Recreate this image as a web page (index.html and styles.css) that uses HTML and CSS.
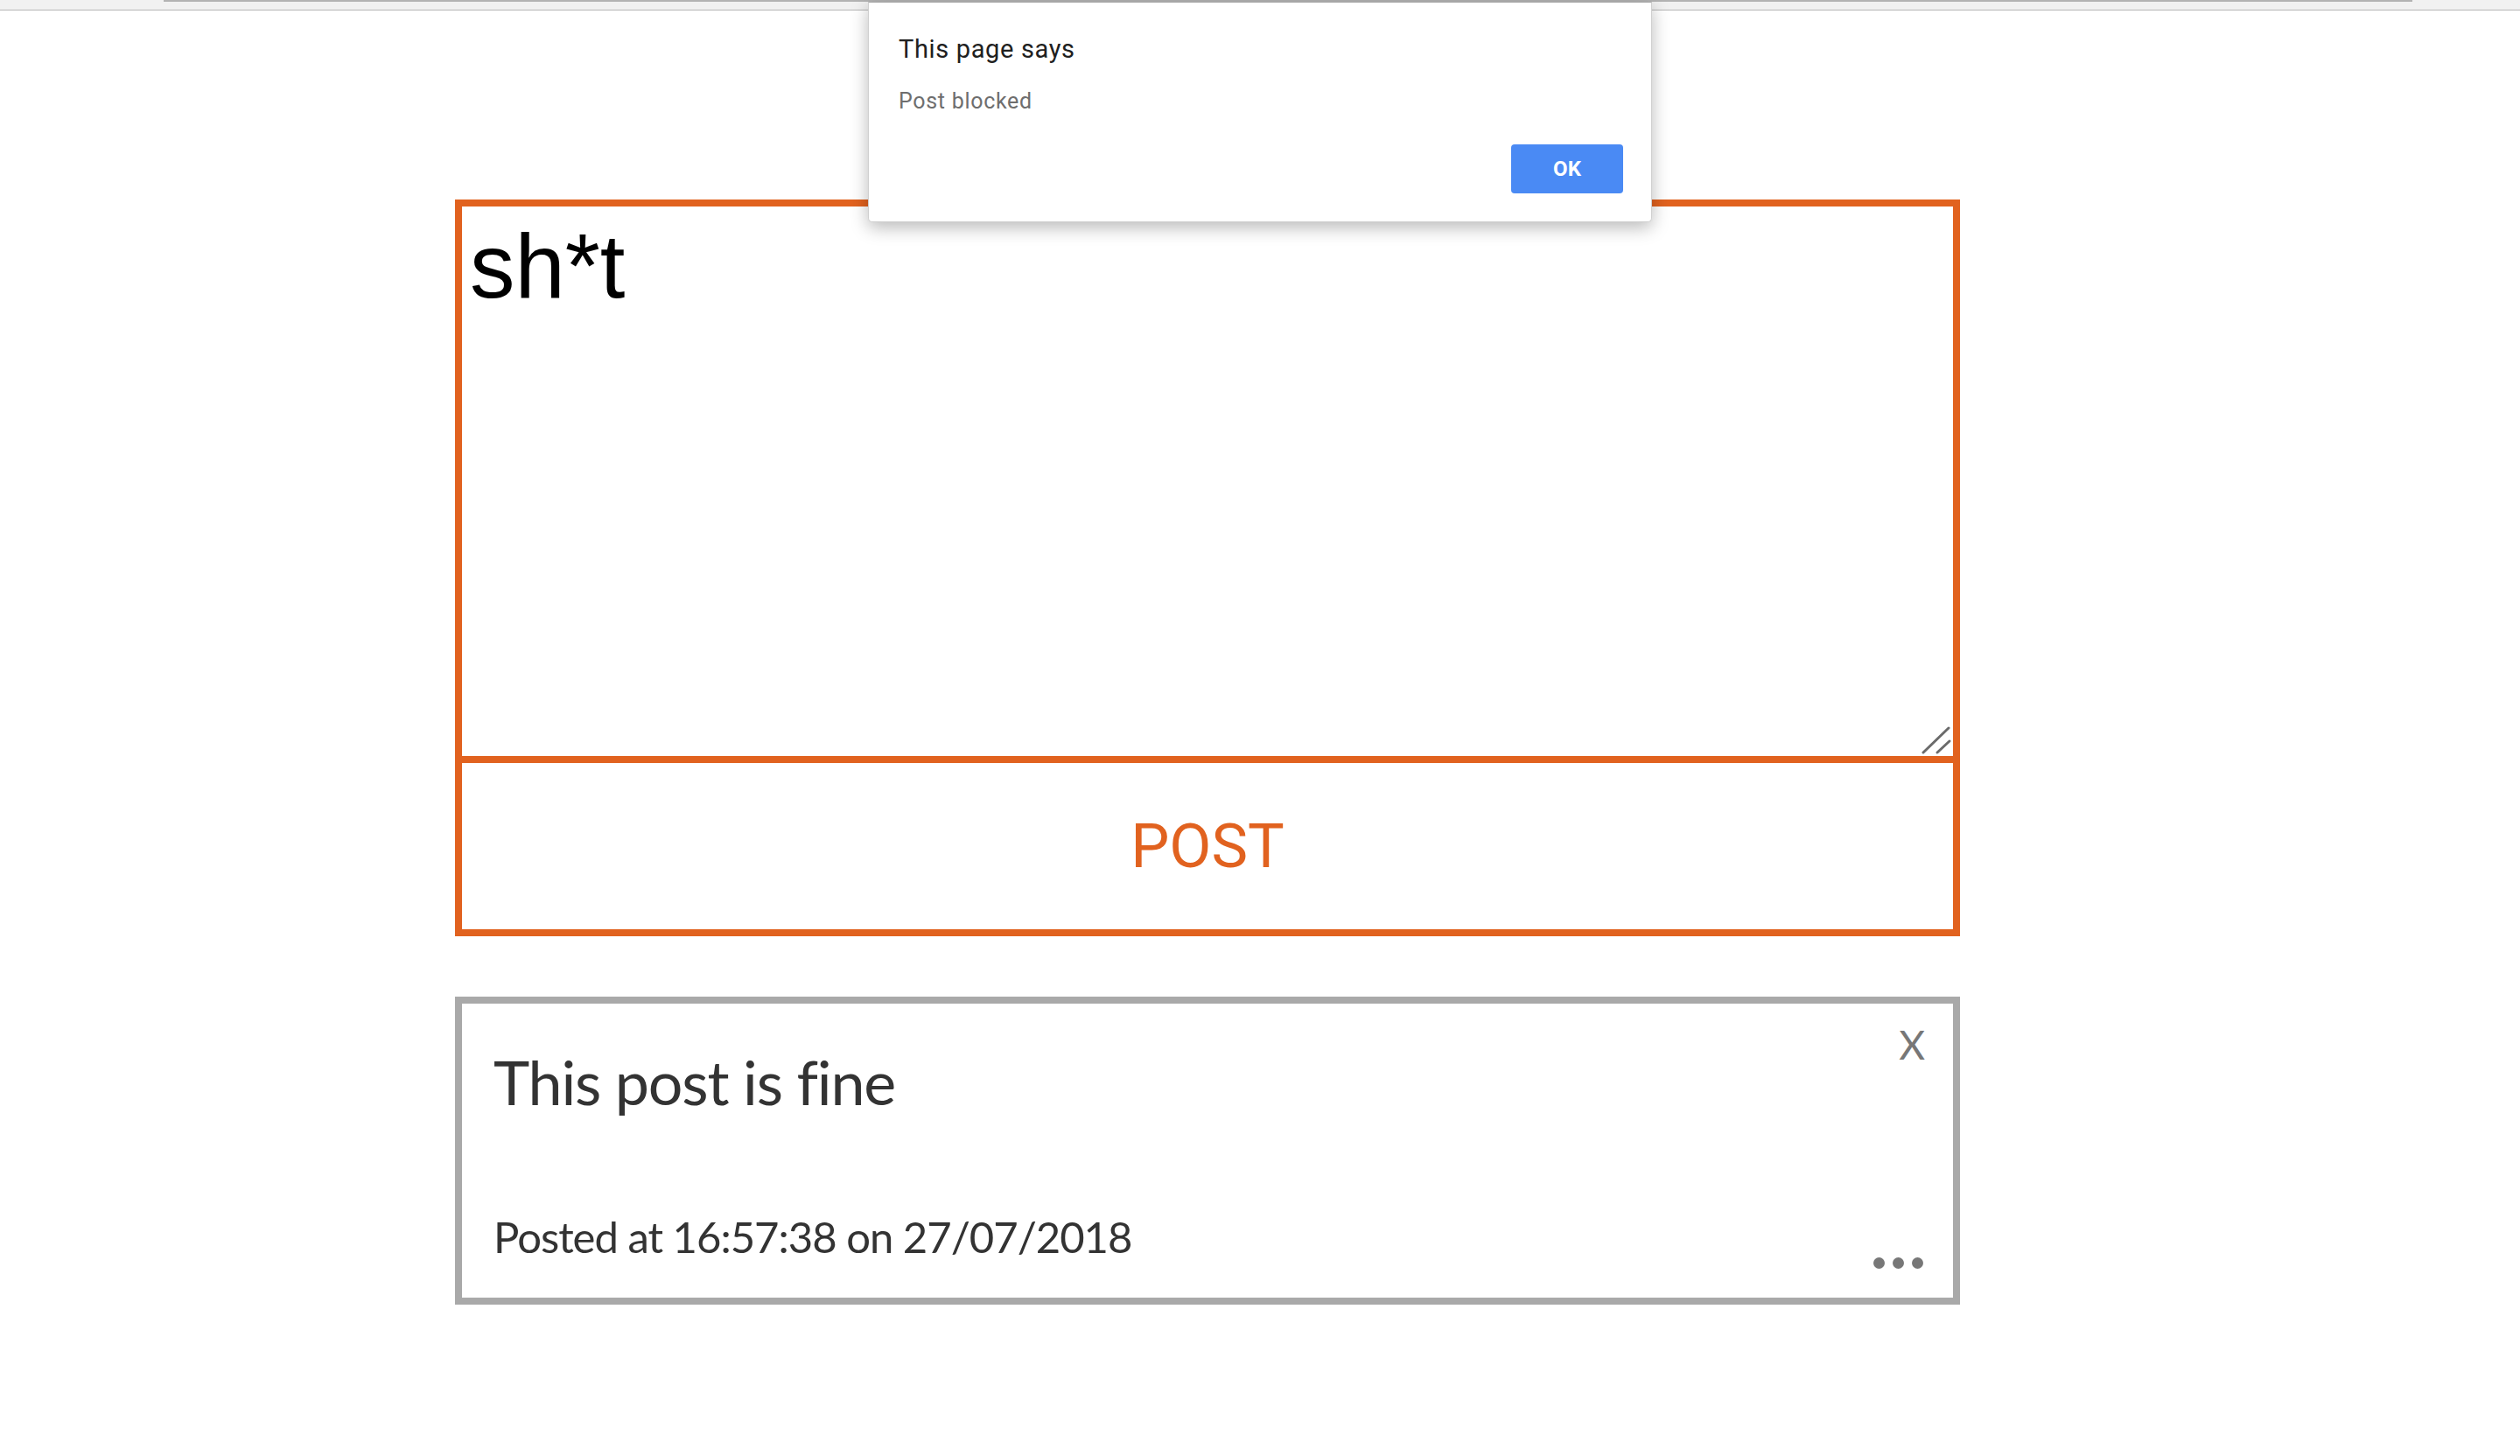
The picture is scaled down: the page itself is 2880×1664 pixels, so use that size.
FILE: index.html
```html
<!DOCTYPE html>
<html lang="en">
<head>
<meta charset="utf-8">
<title>Post</title>
<link rel="stylesheet" href="styles.css">
</head>
<body>
<div class="chrome"><div class="chrome-line"></div></div>

<main class="page">
  <form class="composer">
    <div class="input-box">
      <textarea class="input" spellcheck="false">sh*t</textarea>
      <svg class="grip" width="36" height="36" viewBox="0 0 36 36" aria-hidden="true">
        <line x1="2" y1="32" x2="31" y2="4"/>
        <line x1="18" y1="32" x2="32" y2="19"/>
      </svg>
    </div>
    <button type="button" class="post-btn">POST</button>
  </form>

  <article class="card">
    <h2 class="card-title">This post is fine</h2>
    <p class="card-meta">Posted at 16:57:38 on 27/07/2018</p>
    <span class="card-close">X</span>
    <span class="card-more"><i></i><i></i><i></i></span>
  </article>
</main>

<div class="dialog" role="alertdialog">
  <div class="dialog-title">This page says</div>
  <div class="dialog-msg">Post blocked</div>
  <div class="dialog-actions"><button type="button" class="dialog-ok">OK</button></div>
</div>
</body>
</html>
```

FILE: styles.css
```css
html, body {
  margin: 0;
  padding: 0;
  background: #ffffff;
}

body {
  font-family: "Liberation Sans", Arial, sans-serif;
  position: relative;
  min-height: 1664px;
}

.chrome {
  height: 11px;
  background: #f1f1f1;
  border-bottom: 1px solid #b6b6b6;
}

.chrome-line {
  height: 2px;
  margin: 0 123px 0 187px;
  background: #b3b3b3;
}

.page {
  width: 1720px;
  margin: 216px 0 0 520px;
}

.composer {
  margin: 0;
  display: flex;
  flex-direction: column;
}

.input-box {
  position: relative;
  box-sizing: border-box;
  height: 644px;
  border: 8px solid #e1621f;
}

.input {
  display: block;
  box-sizing: border-box;
  width: 100%;
  height: 100%;
  margin: 0;
  border: 0;
  outline: none;
  resize: none;
  padding: 10px 9px;
  font-family: "Liberation Sans", Arial, sans-serif;
  font-size: 103px;
  color: #000;
  background: #fff;
}

.grip {
  position: absolute;
  right: 0;
  bottom: 0;
}

.grip line {
  stroke: #6b6b6b;
  stroke-width: 3;
  stroke-linecap: round;
}

.post-btn {
  box-sizing: border-box;
  height: 198px;
  margin: 0;
  padding: 0;
  border: 8px solid #e1621f;
  border-top: 0;
  background: #fff;
  color: #e1621f;
  font-family: Roboto, "Liberation Sans", sans-serif;
  font-size: 70px;
  font-weight: 400;
  cursor: pointer;
}

.card {
  position: relative;
  box-sizing: border-box;
  height: 352px;
  margin-top: 69px;
  border: 8px solid #a9a9a9;
  padding: 47px 36px 0 36px;
  font-family: Lato, "Open Sans", sans-serif;
  color: #333333;
}

.card-title {
  margin: 0;
  font-size: 70px;
  font-weight: 400;
  letter-spacing: -1.2px;
  line-height: normal;
}

.card-meta {
  margin: 106px 0 0 0;
  font-size: 49px;
  letter-spacing: -1px;
  line-height: normal;
}

.card-close {
  position: absolute;
  top: 19px;
  right: 32px;
  font-size: 46px;
  line-height: normal;
  color: #777777;
}

.card-more {
  position: absolute;
  right: 34px;
  bottom: 33px;
  display: flex;
  gap: 9px;
}

.card-more i {
  display: block;
  width: 13px;
  height: 13px;
  border-radius: 50%;
  background: #777777;
}

.dialog {
  position: absolute;
  left: 992px;
  top: 2px;
  width: 896px;
  height: 252px;
  box-sizing: border-box;
  display: flex;
  flex-direction: column;
  padding: 36px 32px 32px 34px;
  background: #ffffff;
  border: 1px solid #cfcfcf;
  border-top-color: #a8a8a8;
  border-radius: 0 0 5px 5px;
  box-shadow: 0 6px 20px rgba(0, 0, 0, 0.28);
  font-family: Roboto, "Liberation Sans", sans-serif;
}

.dialog-title {
  font-size: 29px;
  letter-spacing: 0.65px;
  line-height: normal;
  color: #202020;
}

.dialog-msg {
  margin-top: 28px;
  font-size: 25px;
  letter-spacing: 0.7px;
  line-height: normal;
  color: #6e6e6e;
}

.dialog-actions {
  margin-top: auto;
  display: flex;
  justify-content: flex-end;
}

.dialog-ok {
  width: 128px;
  height: 56px;
  margin: 0;
  padding: 0;
  border: 0;
  border-radius: 4px;
  background: #4a8af4;
  color: #ffffff;
  font-family: Roboto, "Liberation Sans", sans-serif;
  font-size: 24px;
  font-weight: 700;
}
```
